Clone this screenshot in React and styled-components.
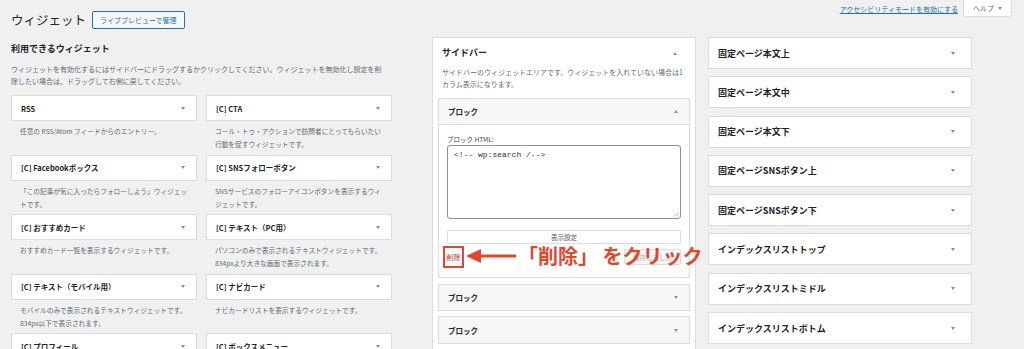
import React from "react";
import styled, { createGlobalStyle } from "styled-components";

const GlobalStyle = createGlobalStyle`
  html, body {
    margin: 0;
    padding: 0;
    background: #f0f0f1;
    width: 1024px;
    height: 349px;
    overflow: hidden;
    font-family: "Noto Sans CJK JP", "Noto Sans", sans-serif;
    color: #1d2327;
  }
  * { box-sizing: border-box; }
`;

const Page = styled.div`
  width: 1024px;
  height: 349px;
  padding-left: 11px;
  overflow: hidden;
`;

const Header = styled.div`
  display: flex;
  justify-content: space-between;
  align-items: flex-start;
  height: 37px;
`;

const TitleWrap = styled.div`
  display: flex;
  align-items: center;
  gap: 6px;
  margin-top: 10px;
`;

const Title = styled.h1`
  margin: 0;
  font-size: 12.5px;
  font-weight: 400;
  line-height: 20px;
`;

const OutlineButton = styled.span`
  display: inline-flex;
  align-items: center;
  height: 18px;
  padding: 0 7px;
  font-size: 7px;
  color: #2271b1;
  background: #f6f7f7;
  border: 1px solid #2271b1;
  border-radius: 2px;
`;

const Meta = styled.div`
  display: flex;
  align-items: flex-start;
  gap: 5px;
  margin-right: 12px;
`;

const MetaLink = styled.a`
  margin-top: 4px;
  font-size: 7px;
  line-height: 10px;
  color: #2271b1;
  text-decoration: underline;
`;

const HelpButton = styled.span`
  display: inline-flex;
  align-items: center;
  gap: 4px;
  height: 17px;
  padding: 0 9px;
  font-size: 7px;
  color: #646970;
  background: #fff;
  border: 1px solid #dcdcde;
  border-top: none;
  border-radius: 0 0 3px 3px;
`;

const Columns = styled.div`
  display: flex;
  align-items: flex-start;
`;

const LeftColumn = styled.div`
  width: 380px;
  margin-right: 41px;
`;

const SectionTitle = styled.h2`
  margin: 5px 0 0;
  font-size: 9px;
  font-weight: 700;
  line-height: 14px;
`;

const Description = styled.p`
  margin: 7px 0 0;
  font-size: 7px;
  line-height: 12px;
  color: #646970;
  white-space: nowrap;
`;

const WidgetGrid = styled.div`
  display: grid;
  grid-template-columns: 186px 186px;
  column-gap: 9px;
  grid-auto-rows: 59.5px;
  margin-top: 8px;
`;

const WidgetCard = styled.div`
  display: flex;
  align-items: center;
  justify-content: space-between;
  height: 26px;
  padding: 0 11px 0 9px;
  background: #fff;
  border: 1px solid #dcdcde;
  font-size: 7.5px;
  font-weight: 700;
`;

const WidgetDesc = styled.div`
  padding: 4px 2px 0 9px;
  font-size: 6.7px;
  line-height: 13px;
  color: #646970;
  white-space: nowrap;
`;

const Caret = styled.span`
  width: 0;
  height: 0;
  border-left: 2.5px solid transparent;
  border-right: 2.5px solid transparent;
  ${p => p.$up ? "border-bottom: 3px solid #8c8f94;" : "border-top: 3px solid #8c8f94;"}
`;

const SidebarPanel = styled.div`
  width: 264px;
  height: 330px;
  margin-right: 12px;
  padding: 0 5px;
  background: #fff;
  border: 1px solid #dcdcde;
`;

const PanelHead = styled.div`
  display: flex;
  justify-content: space-between;
  align-items: center;
  padding: 8px 13px 0 4px;
  font-size: 9px;
  font-weight: 700;
  line-height: 14px;
`;

const PanelDesc = styled.p`
  margin: 7px 0 0 4px;
  font-size: 7px;
  line-height: 11.5px;
  color: #646970;
  white-space: nowrap;
`;

const Block = styled.div`
  margin-top: ${p => p.$gap}px;
  border: 1px solid #dcdcde;
`;

const BlockHead = styled.div`
  display: flex;
  justify-content: space-between;
  align-items: center;
  height: ${p => p.$h}px;
  padding: 0 11px 0 9px;
  background: #f6f7f7;
  font-size: 7.5px;
  font-weight: 700;
`;

const BlockBody = styled.div`
  padding: 9px 8px 9px 8px;
  background: #fff;
  border-top: 1px solid #dcdcde;
`;

const FieldLabel = styled.div`
  font-size: 6.5px;
  line-height: 10px;
  color: #3c434a;
`;

const CodeArea = styled.div`
  position: relative;
  height: 74px;
  margin-top: 1px;
  padding: 3px 6px;
  border: 1px solid #8c8f94;
  border-radius: 3px;
  font-family: "Liberation Mono", monospace;
  font-size: 8px;
  line-height: 11px;
  color: #2c3338;
`;

const Grip = styled.svg`
  position: absolute;
  right: 1px;
  bottom: 1px;
`;

const WideButton = styled.div`
  display: flex;
  align-items: center;
  justify-content: center;
  height: 14px;
  margin-top: 11px;
  border: 1px solid #dcdcde;
  border-radius: 2px;
  font-size: 6.5px;
  color: #50575e;
`;

const ActionRow = styled.div`
  position: relative;
  display: flex;
  align-items: center;
  justify-content: space-between;
  height: 22px;
  margin-top: 2px;
`;

const DeleteBox = styled.span`
  margin-left: -4px;
  padding: 3px 1.5px;
  border: 2px solid #e2462b;
  font-size: 7px;
  line-height: 12px;
  color: #b32d2e;
`;

const SaveButton = styled.span`
  display: inline-flex;
  align-items: center;
  height: 16px;
  padding: 0 8px;
  background: #f6f7f7;
  border: 1px solid #dcdcde;
  border-radius: 2px;
  font-size: 6.5px;
  color: #a7aaad;
`;

const Callout = styled.div`
  position: absolute;
  left: 19px;
  top: -2px;
  display: flex;
  align-items: center;
  gap: 2px;
  white-space: nowrap;
`;

const CalloutText = styled.span`
  font-size: 20px;
  font-weight: 700;
  line-height: 24px;
  color: #e2462b;
`;

const RightColumn = styled.div`
  display: flex;
  flex-direction: column;
  gap: 7.3px;
  width: 264px;
`;

const AreaCard = styled.div`
  display: flex;
  justify-content: space-between;
  align-items: center;
  height: 32px;
  padding: 0 16px 0 9px;
  background: #fff;
  border: 1px solid #dcdcde;
  font-size: 9px;
  font-weight: 700;
`;

const widgets = [
  ["RSS", ["任意の RSS/Atom フィードからのエントリー。"]],
  ["[C] CTA", ["コール・トゥ・アクションで訪問者にとってもらいたい", "行動を促すウィジェットです。"]],
  ["[C] Facebookボックス", ["「この記事が気に入ったらフォローしよう」ウィジェッ", "トです。"]],
  ["[C] SNSフォローボタン", ["SNSサービスのフォローアイコンボタンを表示するウィ", "ジェットです。"]],
  ["[C] おすすめカード", ["おすすめカード一覧を表示するウィジェットです。"]],
  ["[C] テキスト（PC用）", ["パソコンのみで表示されるテキストウィジェットです。", "834pxより大きな画面で表示されます。"]],
  ["[C] テキスト（モバイル用）", ["モバイルのみで表示されるテキストウィジェットです。", "834px以下で表示されます。"]],
  ["[C] ナビカード", ["ナビカードリストを表示するウィジェットです。"]],
  ["[C] プロフィール", []],
  ["[C] ボックスメニュー", []],
];

const areas = [
  "固定ページ本文上",
  "固定ページ本文中",
  "固定ページ本文下",
  "固定ページSNSボタン上",
  "固定ページSNSボタン下",
  "インデックスリストトップ",
  "インデックスリストミドル",
  "インデックスリストボトム",
];

const Lines = ({ lines }) =>
  lines.map((l, i) => (
    <React.Fragment key={i}>
      {i > 0 && <br />}
      {l}
    </React.Fragment>
  ));

export default function App() {
  return (
    <Page>
      <GlobalStyle />
      <Header>
        <TitleWrap>
          <Title>ウィジェット</Title>
          <OutlineButton>ライブプレビューで管理</OutlineButton>
        </TitleWrap>
        <Meta>
          <MetaLink>アクセシビリティモードを有効にする</MetaLink>
          <HelpButton>
            ヘルプ <Caret />
          </HelpButton>
        </Meta>
      </Header>

      <Columns>
        <LeftColumn>
          <SectionTitle>利用できるウィジェット</SectionTitle>
          <Description>
            ウィジェットを有効化するにはサイドバーにドラッグするかクリックしてください。ウィジェットを無効化し設定を削
            <br />
            除したい場合は、ドラッグして右側に戻してください。
          </Description>
          <WidgetGrid>
            {widgets.map(([name, desc]) => (
              <div key={name}>
                <WidgetCard>
                  {name}
                  <Caret />
                </WidgetCard>
                <WidgetDesc>
                  <Lines lines={desc} />
                </WidgetDesc>
              </div>
            ))}
          </WidgetGrid>
        </LeftColumn>

        <SidebarPanel>
          <PanelHead>
            サイドバー
            <Caret $up />
          </PanelHead>
          <PanelDesc>
            サイドバーのウィジェットエリアです。ウィジェットを入れていない場合は1
            <br />
            カラム表示になります。
          </PanelDesc>

          <Block $gap={8}>
            <BlockHead $h={25}>
              ブロック
              <Caret $up />
            </BlockHead>
            <BlockBody>
              <FieldLabel>ブロック HTML:</FieldLabel>
              <CodeArea>
                {"<!-- wp:search /-->"}
                <Grip width="6" height="6" viewBox="0 0 6 6">
                  <path d="M5.5 1 L1 5.5 M5.5 3.5 L3.5 5.5" stroke="#a7aaad" strokeWidth="0.7" />
                </Grip>
              </CodeArea>
              <WideButton>表示設定</WideButton>
              <ActionRow>
                <DeleteBox>削除</DeleteBox>
                <SaveButton>保存しました</SaveButton>
                <Callout>
                  <svg width="50" height="16" viewBox="0 0 50 16">
                    <polygon points="0,8 15,1 15,15" fill="#e2462b" />
                    <rect x="13" y="6.5" width="37" height="3" fill="#e2462b" />
                  </svg>
                  <CalloutText>「削除」 をクリック</CalloutText>
                </Callout>
              </ActionRow>
            </BlockBody>
          </Block>

          <Block $gap={6}>
            <BlockHead $h={25}>
              ブロック
              <Caret />
            </BlockHead>
          </Block>
          <Block $gap={5}>
            <BlockHead $h={26}>
              ブロック
              <Caret />
            </BlockHead>
          </Block>
        </SidebarPanel>

        <RightColumn>
          {areas.map(a => (
            <AreaCard key={a}>
              {a}
              <Caret />
            </AreaCard>
          ))}
        </RightColumn>
      </Columns>
    </Page>
  );
}
